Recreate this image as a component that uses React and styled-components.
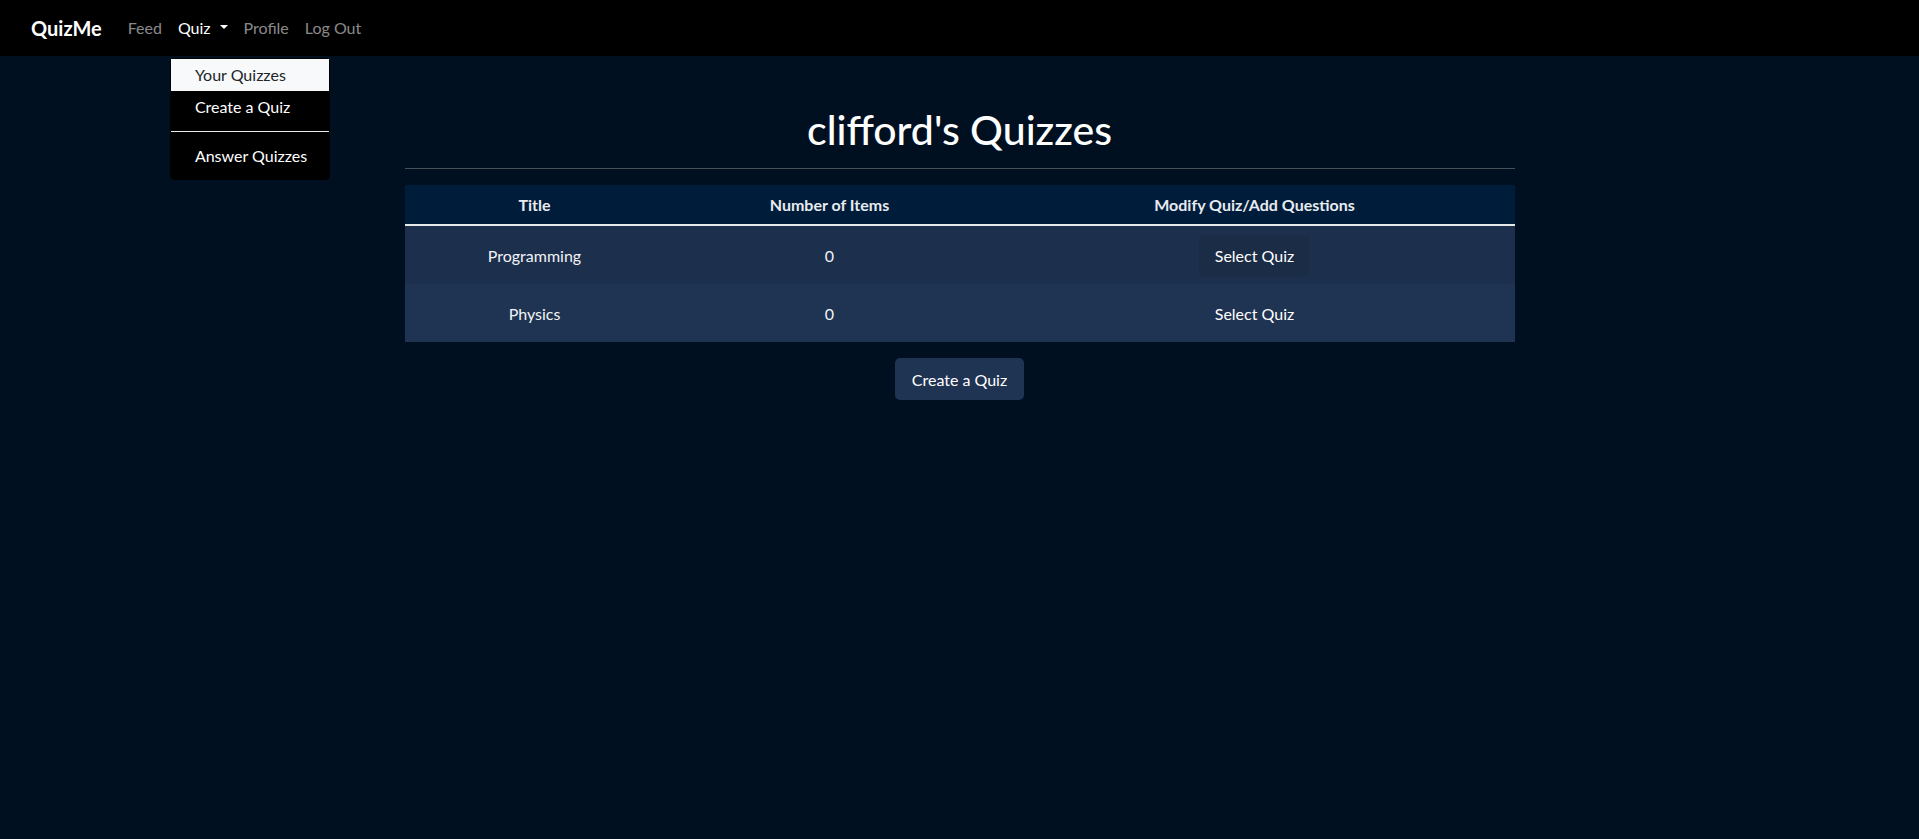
import React from "react";
import styled, { createGlobalStyle } from "styled-components";

const GlobalStyle = createGlobalStyle`
  html, body {
    margin: 0;
    padding: 0;
    background: #001021;
    min-height: 100%;
  }
  body {
    font-family: "Lato", "Open Sans", "Liberation Sans", sans-serif;
    font-size: 16px;
    line-height: 1.5;
    color: #ffffff;
  }
  #root {
    min-height: 839px;
    background: #001021;
  }
  * { box-sizing: border-box; }
`;

const NavBar = styled.nav`
  height: 56px;
  background: #000000;
  display: flex;
  align-items: center;
  padding: 0 31px;
`;

const Brand = styled.a`
  font-size: 20px;
  font-weight: 700;
  color: #ffffff;
  text-decoration: none;
  margin-right: 18px;
  line-height: 30px;
`;

const NavList = styled.ul`
  list-style: none;
  margin: 0;
  padding: 0;
  display: flex;
  align-items: center;
`;

const NavItem = styled.li`
  position: relative;
`;

const NavLink = styled.a`
  display: flex;
  align-items: center;
  padding: 8px;
  line-height: 24px;
  color: ${(p) => (p.$active ? "#ffffff" : "rgba(255,255,255,0.55)")};
  text-decoration: none;
  cursor: pointer;
`;

const Caret = styled.span`
  display: inline-block;
  margin-left: 9px;
  width: 0;
  height: 0;
  border-top: 4.5px solid currentColor;
  border-left: 4px solid transparent;
  border-right: 4px solid transparent;
  transform: translateY(-1px);
`;

const DropMenu = styled.div`
  position: absolute;
  top: 100%;
  left: 0;
  margin-top: 10px;
  width: 160px;
  background: #000000;
  border: 1px solid #000000;
  border-radius: 4px;
  padding: 0 0 7px;
  z-index: 10;
`;

const DropItem = styled.a`
  display: block;
  padding: 4px 24px;
  line-height: 24px;
  white-space: nowrap;
  text-decoration: none;
  color: ${(p) => (p.$active ? "#212529" : "#ffffff")};
  background: ${(p) => (p.$active ? "#f8f9fa" : "transparent")};
`;

const DropDivider = styled.div`
  height: 1px;
  margin: 8px 0;
  background: #e9ecef;
`;

const Main = styled.main`
  max-width: 1140px;
  margin: 0 auto;
  padding: 50px 15px 0;
`;

const Heading = styled.h1`
  margin: 0;
  text-align: center;
  font-size: 41px;
  font-weight: 500;
  line-height: 48px;
  color: #ffffff;
`;

const Rule = styled.hr`
  margin: 14px 0 16px;
  border: 0;
  border-top: 1px solid #464e58;
`;

const Table = styled.table`
  width: 100%;
  border-collapse: collapse;
  table-layout: fixed;
  text-align: center;
`;

const HeadCell = styled.th`
  width: ${(p) => p.$w}px;
  background: #001c3b;
  color: #e8ebef;
  font-weight: 700;
  height: 40px;
  padding: 1px 12px 0;
  border-bottom: 2px solid #e6e9ec;
  vertical-align: middle;
`;

const Row = styled.tr`
  background: ${(p) => (p.$alt ? "#1f3352" : "#1c2f4d")};
`;

const Cell = styled.td`
  height: 58px;
  padding: 9px 12px 7px;
  color: #f1f3f5;
  vertical-align: middle;
`;

const SelectButton = styled.button`
  display: inline-block;
  vertical-align: middle;
  font: inherit;
  color: #ffffff;
  background: ${(p) => (p.$focus ? "#1b2c47" : "transparent")};
  border: 0;
  border-radius: 5px;
  padding: 9px 16px;
  line-height: 24px;
  cursor: pointer;
`;

const Actions = styled.div`
  display: flex;
  justify-content: center;
  margin-top: 16px;
`;

const CreateButton = styled.button`
  font: inherit;
  color: #ffffff;
  background: #1f3352;
  border: 0;
  border-radius: 5px;
  padding: 10px 17px 8px;
  line-height: 24px;
  cursor: pointer;
`;

const quizzes = [
  { title: "Programming", items: 0 },
  { title: "Physics", items: 0 },
];

export default function App() {
  return (
    <>
      <GlobalStyle />
      <NavBar>
        <Brand href="#">QuizMe</Brand>
        <NavList>
          <NavItem>
            <NavLink>Feed</NavLink>
          </NavItem>
          <NavItem>
            <NavLink $active>
              Quiz
              <Caret />
            </NavLink>
            <DropMenu>
              <DropItem $active>Your Quizzes</DropItem>
              <DropItem>Create a Quiz</DropItem>
              <DropDivider />
              <DropItem>Answer Quizzes</DropItem>
            </DropMenu>
          </NavItem>
          <NavItem>
            <NavLink>Profile</NavLink>
          </NavItem>
          <NavItem>
            <NavLink>Log Out</NavLink>
          </NavItem>
        </NavList>
      </NavBar>
      <Main>
        <Heading>clifford's Quizzes</Heading>
        <Rule />
        <Table>
          <thead>
            <tr>
              <HeadCell $w={260}>Title</HeadCell>
              <HeadCell $w={330}>Number of Items</HeadCell>
              <HeadCell $w={520}>Modify Quiz/Add Questions</HeadCell>
            </tr>
          </thead>
          <tbody>
            {quizzes.map((q, i) => (
              <Row key={q.title} $alt={i % 2 === 1}>
                <Cell>{q.title}</Cell>
                <Cell>{q.items}</Cell>
                <Cell>
                  <SelectButton $focus={i === 0}>Select Quiz</SelectButton>
                </Cell>
              </Row>
            ))}
          </tbody>
        </Table>
        <Actions>
          <CreateButton>Create a Quiz</CreateButton>
        </Actions>
      </Main>
    </>
  );
}
